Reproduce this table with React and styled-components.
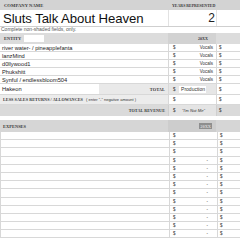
import React from "react";
import styled, { createGlobalStyle } from "styled-components";

const GlobalStyle = createGlobalStyle`
  html, body {
    margin: 0;
    padding: 0;
    background: #fff;
    overflow: hidden;
  }
  body {
    font-family: "Liberation Sans", Arial, sans-serif;
    color: #222;
  }
`;

const Sheet = styled.div`
  width: 240px;
  height: 240px;
  display: flex;
  flex-direction: column;
  overflow: hidden;
`;

const Row = styled.div`
  display: grid;
  grid-template-columns: 168px 48px 1fr;
  height: ${(p) => p.h}px;
  flex-shrink: 0;
  background: ${(p) => p.bg || "#fff"};
  border-bottom: ${(p) => (p.line ? `1px solid ${p.line}` : "none")};
  box-sizing: border-box;
`;

const Cell = styled.div`
  display: flex;
  align-items: center;
  justify-content: ${(p) => p.justify || "flex-start"};
  gap: ${(p) => p.gap || 0}px;
  padding: 0 ${(p) => p.pr ?? 2}px 0 ${(p) => p.pl ?? 2}px;
  background: ${(p) => p.bg || "transparent"};
  border-left: ${(p) => (p.divider ? `1px solid ${p.divider}` : "none")};
  box-sizing: border-box;
  min-width: 0;
  overflow: ${(p) => (p.spill ? "visible" : "hidden")};
  white-space: nowrap;
`;

const Label = styled.span`
  font-family: "Liberation Serif", "Times New Roman", serif;
  font-weight: 700;
  font-size: ${(p) => p.size || 4.4}px;
  letter-spacing: ${(p) => p.track ?? 0.05}px;
  text-transform: uppercase;
  color: #3a3a3a;
`;

const Title = styled.span`
  font-size: 13.2px;
  color: #111;
  letter-spacing: -0.1px;
`;

const YearValue = styled.span`
  font-size: 12px;
  color: #222;
`;

const Note = styled.div`
  font-size: 5px;
  color: #555;
  height: 5px;
  line-height: 5px;
  padding-left: 1px;
  flex-shrink: 0;
`;

const Name = styled.span`
  font-size: 5.7px;
  color: #222;
`;

const Small = styled.span`
  font-size: ${(p) => p.size || 4.5}px;
  color: #333;
  font-style: ${(p) => (p.italic ? "italic" : "normal")};
`;

const InputBox = styled.span`
  display: inline-block;
  width: 20px;
  height: 7px;
  background: #fff;
  margin-left: 3px;
`;

const ValueBox = styled.span`
  display: flex;
  align-items: center;
  justify-content: flex-end;
  background: #fff;
  height: 7px;
  padding: 0 1px 0 2px;
  min-width: 22px;
`;

const Split = styled.div`
  display: flex;
  align-items: stretch;
`;

const TotalTag = styled.div`
  flex: 0 0 66px;
  display: flex;
  align-items: center;
  justify-content: flex-end;
  padding-right: 3px;
  background: #e9e9e9;
`;

const Grow = styled.div`
  flex: 1;
  display: flex;
  align-items: center;
  padding-left: 2px;
`;

const Highlight = styled.span`
  font-family: "Liberation Serif", serif;
  font-weight: 700;
  font-size: 4.4px;
  background: #8e8e8e;
  color: #d8d8d8;
  padding: 0.5px 1px;
`;

const Gap = styled.div`
  height: 4px;
  flex-shrink: 0;
`;

const entities = [
  "river water- / pineapplefanta",
  "lanzMind",
  "d0llywood1",
  "Phukshitt",
  "Synful / endlessbloom504",
];

const GRID = "#d8d8d8";

export default function App() {
  const expenseRows = Array.from({ length: 13 }, (_, i) => i);
  return (
    <Sheet>
      <GlobalStyle />
      <Row h={10} bg="#d3d3d3">
        <Cell pl={4}>
          <Label size={4.6}>Company Name</Label>
        </Cell>
        <Cell spill pl={4} pr={0}>
          <Label size={4} track={-0.05}>Years Represented</Label>
        </Cell>
        <Cell />
      </Row>
      <Row h={17} line="#cfcfcf">
        <Cell pl={3}>
          <Title>Sluts Talk About Heaven</Title>
        </Cell>
        <Cell justify="flex-end" pr={1} divider="#e2e2e2">
          <YearValue>2</YearValue>
        </Cell>
        <Cell divider="#e2e2e2" />
      </Row>
      <Note>Complete non-shaded fields, only.</Note>
      <Row h={11} bg="#dcdcdc" style={{ marginTop: 1 }}>
        <Cell pl={4}>
          <Label>Entity</Label>
          <InputBox />
        </Cell>
        <Cell justify="flex-end" pr={8} bg="#d2d2d2">
          <Label size={4}>20XX</Label>
        </Cell>
        <Cell />
      </Row>
      {entities.map((name) => (
        <Row key={name} h={8} line={GRID}>
          <Cell pl={2}>
            <Name>{name}</Name>
          </Cell>
          <Cell justify="space-between" pl={4} pr={3} divider={GRID}>
            <Small>$</Small>
            <Small>Vocals</Small>
          </Cell>
          <Cell divider={GRID}>
            <Small>$</Small>
          </Cell>
        </Row>
      ))}
      <Row h={11} line={GRID}>
        <Split>
          <Grow>
            <Name>Hakeon</Name>
          </Grow>
          <TotalTag>
            <Label>Total</Label>
          </TotalTag>
        </Split>
        <Cell justify="space-between" pl={4} pr={10} bg="#e6e6e6" divider={GRID}>
          <Small>$</Small>
          <ValueBox>
            <Small size={5}>Production</Small>
          </ValueBox>
        </Cell>
        <Cell divider={GRID}>
          <Small>$</Small>
        </Cell>
      </Row>
      <Row h={10} line={GRID}>
        <Cell pl={3} gap={3} bg="#ececec">
          <Label size={4.2}>Less Sales Returns / Allowances</Label>
          <Small size={4}>( enter "-" negative amount )</Small>
        </Cell>
        <Cell pl={4} divider={GRID}>
          <Small>$</Small>
        </Cell>
        <Cell divider={GRID}>
          <Small>$</Small>
        </Cell>
      </Row>
      <Row h={11} bg="#dadada">
        <Cell justify="flex-end" pr={3}>
          <Label size={4.2}>Total Revenue</Label>
        </Cell>
        <Cell justify="space-between" pl={4} pr={11} bg="#e4e4e4" divider="#cfcfcf">
          <Small>$</Small>
          <Small italic size={4.2}>"I'm Not Me"</Small>
        </Cell>
        <Cell divider="#cfcfcf">
          <Small>$</Small>
        </Cell>
      </Row>
      <Gap />
      <Row h={12} bg="#d6d6d6">
        <Cell pl={3}>
          <Label>Expenses</Label>
        </Cell>
        <Cell justify="flex-end" pr={4} bg="#cdcdcd">
          <Highlight>20XX</Highlight>
        </Cell>
        <Cell />
      </Row>
      {expenseRows.map((i) => (
        <Row key={i} h={8.2} line={GRID} style={{ borderLeft: `1px solid ${GRID}` }}>
          <Cell />
          <Cell justify="space-between" pl={3} pr={9} divider={GRID}>
            <Small>$</Small>
            {i >= 3 && <Small>-</Small>}
          </Cell>
          <Cell divider={GRID}>
            <Small>$</Small>
          </Cell>
        </Row>
      ))}
    </Sheet>
  );
}
